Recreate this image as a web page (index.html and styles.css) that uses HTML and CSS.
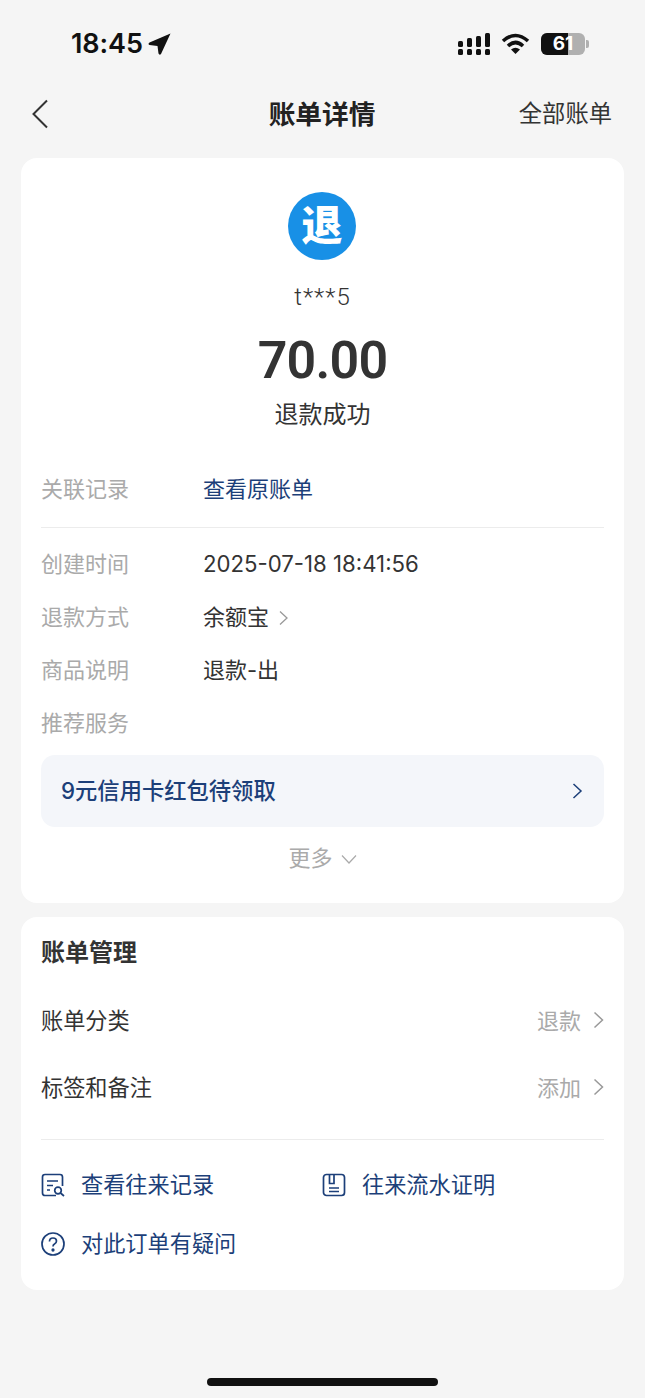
FILE: index.html
```html
<!DOCTYPE html>
<html lang="zh-CN">
<head>
<meta charset="utf-8">
<title>账单详情</title>
<link rel="stylesheet" href="styles.css">
</head>
<body>
<div class="page">
  <div class="status">
    <div class="status-left">
      <span class="time">18:45</span>
      <svg class="loc" width="23" height="22" viewBox="0 0 23 22"><path d="M22.500 0.500 L13 21 Q11.500 22.500 10.500 20.500 L9.500 13 L1.500 12 Q-0.500 11 1.500 9.500 Z" fill="#111"/></svg>
    </div>
    <div class="status-right">
      <svg width="34" height="22" viewBox="0 0 34 22" fill="#111"><rect x="1" y="8" width="5" height="6" rx="1.500"/><rect x="1" y="16" width="5" height="6" rx="1.500"/><rect x="10" y="5" width="5" height="9" rx="1.500"/><rect x="10" y="16" width="5" height="6" rx="1.500"/><rect x="19" y="3" width="5" height="11" rx="1.500"/><rect x="19" y="16" width="5" height="6" rx="1.500"/><rect x="28" y="0" width="5" height="14" rx="1.500"/><rect x="28" y="16" width="5" height="6" rx="1.500"/></svg>
      <svg class="wifi" width="29" height="21" viewBox="0 0 29 21" fill="none" stroke="#111" stroke-width="3.600"><path d="M2 8 Q14.500 -3 27 8"/><path d="M7 13 Q14.500 6 22 13"/><path d="M14.500 21 L10 16.500 Q14.500 13 19 16.500 Z" fill="#111" stroke="none"/></svg>
      <div class="battery"><div class="battery-fill"></div><span class="battery-num">61</span></div>
      <span class="battery-cap"></span>
    </div>
  </div>

  <div class="nav">
    <svg class="back" width="18" height="30" viewBox="0 0 18 30" fill="none" stroke="#333" stroke-width="2"><path d="M16 1.500 L2.500 15 L16 28.500"/></svg>
    <div class="nav-title">账单详情</div>
    <div class="nav-all">全部账单</div>
  </div>

  <section class="card card-main">
    <div class="avatar">退</div>
    <div class="account">t***5</div>
    <div class="amount">70.00</div>
    <div class="state">退款成功</div>
    <div class="row row-link"><span class="label">关联记录</span><span class="value link">查看原账单</span></div>
    <div class="line"></div>
    <div class="row row-time"><span class="label">创建时间</span><span class="value value-date">2025-07-18 18:41:56</span></div>
    <div class="row"><span class="label">退款方式</span><span class="value">余额宝<svg class="chev-inline" width="11" height="16" viewBox="0 0 11 16" fill="none" stroke="#999" stroke-width="1.300"><path d="M2 1.500 L9 8 L2 14.500"/></svg></span></div>
    <div class="row"><span class="label">商品说明</span><span class="value">退款-出</span></div>
    <div class="row"><span class="label">推荐服务</span></div>
    <div class="promo">
      <span>9元信用卡红包待领取</span>
      <svg width="11" height="16" viewBox="0 0 11 16" fill="none" stroke="#1c3f79" stroke-width="1.500"><path d="M1.500 1 L9 8 L1.500 15"/></svg>
    </div>
    <div class="more"><span>更多</span><svg width="16" height="10" viewBox="0 0 16 10" fill="none" stroke="#aaa" stroke-width="1.200"><path d="M1 1.500 L8 9 L15 1.500"/></svg></div>
  </section>

  <section class="card card-manage">
    <h2 class="manage-title">账单管理</h2>
    <div class="mrow"><span>账单分类</span><span class="mval">退款<svg width="11" height="18" viewBox="0 0 11 18" fill="none" stroke="#999" stroke-width="1.500"><path d="M1.500 1.500 L9.500 9 L1.500 16.500"/></svg></span></div>
    <div class="mrow"><span>标签和备注</span><span class="mval">添加<svg width="11" height="18" viewBox="0 0 11 18" fill="none" stroke="#999" stroke-width="1.500"><path d="M1.500 1.500 L9.500 9 L1.500 16.500"/></svg></span></div>
    <div class="line line-manage"></div>
    <div class="actions">
      <div class="action">
        <svg width="24" height="24" viewBox="0 0 24 24" fill="none" stroke="#1c3f79" stroke-width="1.700"><path d="M15 22.500 H4 Q1.500 22.500 1.500 20 V4 Q1.500 1.500 4 1.500 H19 Q21.500 1.500 21.500 4 V13"/><path d="M6 8 H17 M6 12.500 H12 M6 17 H9"/><circle cx="17" cy="17.500" r="3.300"/><path d="M19.500 20 L23 23"/></svg>
        <span>查看往来记录</span>
      </div>
      <div class="action">
        <svg width="24" height="24" viewBox="0 0 24 24" fill="none" stroke="#1c3f79" stroke-width="1.700"><rect x="1.500" y="1.500" width="21" height="21" rx="3"/><path d="M7.500 2 V10.500 H12 V2 M7 15 H17 M7 18.500 H17"/></svg>
        <span>往来流水证明</span>
      </div>
      <div class="action">
        <svg width="24" height="24" viewBox="0 0 24 24" fill="none" stroke="#1c3f79" stroke-width="1.700"><circle cx="12" cy="12" r="11"/><path d="M8.500 9.500 Q8.500 6 12 6 Q15.500 6 15.500 9 Q15.500 11 13.500 12 Q12 12.800 12 14.500"/><circle cx="12" cy="18" r="0.800" fill="#1c3f79"/></svg>
        <span>对此订单有疑问</span>
      </div>
    </div>
  </section>

  <div class="home"></div>
</div>
</body>
</html>
```
FILE: styles.css
```css
* { box-sizing: border-box; }
html, body { margin: 0; padding: 0; }
body {
  width: 645px;
  height: 1398px;
  overflow: hidden;
  background: #f5f5f5;
  font-family: Inter, "Noto Sans CJK SC", sans-serif;
  color: #333;
}
.page { position: relative; height: 1398px; display: flex; flex-direction: column; }

.status { height: 86px; display: flex; justify-content: space-between; padding: 30px 56px 0 71px; flex: none; }
.status-left { display: flex; align-items: flex-start; gap: 5px; }
.time { font-family: Inter, sans-serif; font-size: 27px; font-weight: 600; line-height: 28px; color: #111; letter-spacing: -0.100px; }
.loc { margin-top: 3px; }
.status-right { display: flex; align-items: flex-start; height: 26px; gap: 10px; padding-top: 3px; }
.battery { position: relative; width: 44px; height: 22px; margin-left: 1px; background: #b0b0b0; border-radius: 6px; overflow: hidden; }
.battery-fill { width: 27px; height: 22px; background: #111; }
.battery-num { position: absolute; left: 0; right: 0; top: 0; text-align: center; font-family: Inter, sans-serif; font-size: 19px; font-weight: 700; line-height: 22px; color: #fff; }
.battery-cap { width: 3px; height: 8px; margin: 7px 0 0 -9px; background: #b0b0b0; border-radius: 0 2px 2px 0; }

.nav { position: relative; height: 80px; flex: none; margin-top: -8px; display: flex; justify-content: center; }
.back { position: absolute; left: 31px; top: 21px; }
.nav-title { font-size: 26.700px; font-weight: 700; color: #222; line-height: 36px; margin-top: 18px; margin-right: 1px; }
.nav-all { position: absolute; right: 33px; top: 19px; font-size: 23.300px; line-height: 34px; color: #333; }

.card { background: #fff; border-radius: 16px; margin: 0 21px; flex: none; }
.card-main { height: 745px; padding: 34px 20px 0; display: flex; flex-direction: column; }
.avatar { width: 68px; height: 68px; margin-right: 1px; border-radius: 50%; background: #1890e6; color: #fff; align-self: center; text-align: center; font-size: 41px; font-weight: 900; line-height: 66px; flex: none; }
.account { text-align: center; font-family: Roboto, sans-serif; font-size: 24px; font-weight: 300; line-height: 30px; margin-top: 22px; letter-spacing: 1px; }
.amount { text-align: center; font-family: Roboto, sans-serif; font-size: 52px; font-weight: 600; line-height: 60px; margin-top: 19px; letter-spacing: -0.800px; color: #333; }
.state { text-align: center; font-size: 24px; line-height: 34px; margin-top: 7px; color: #333; }

.row { display: flex; height: 53px; align-items: center; font-size: 22px; flex: none; }
.row-link { margin-top: 28px; height: 54px; }
.row-time { margin-top: 7px; }
.label { width: 162px; color: #aaa; flex: none; }
.value { color: #333; display: flex; align-items: center; }
.value-date { font-size: 22.200px; margin-top: 3px; }
.link { color: #1c3f79; }
.chev-inline { margin-left: 9px; margin-top: 6px; }
.line { height: 1px; background: #ececec; flex: none; margin-top: 13px; }

.promo { display: flex; justify-content: space-between; align-items: center; height: 72px; border-radius: 14px; background: #f4f6fa; padding: 0 21px 0 20px; margin-top: 8px; font-size: 22.300px; font-weight: 500; color: #1c3f79; flex: none; }
.promo span { margin-bottom: 4px; }
.more { display: flex; justify-content: center; align-items: center; gap: 8px; margin-top: 11px; height: 36px; font-size: 22px; color: #aaa; }
.more svg { margin-top: 6px; }

.card-manage { height: 373px; margin-top: 14px; padding: 16px 20px 0; }
.manage-title { margin: 0; font-size: 24px; font-weight: 700; line-height: 40px; color: #333; }
.mrow { display: flex; justify-content: space-between; align-items: center; height: 67px; font-size: 22.200px; color: #333; }
.manage-title + .mrow { margin-top: 12px; }
.mval { display: flex; align-items: center; gap: 12px; color: #aaa; font-size: 22px; }
.mval svg { margin-top: 2px; }
.line-manage { margin-top: 20px; }
.actions { display: grid; grid-template-columns: 281px 1fr; row-gap: 23px; margin-top: 25px; }
.action { display: flex; align-items: center; gap: 16px; height: 36px; font-size: 22.200px; color: #1c3f79; }
.action svg { margin-top: 4px; }

.home { position: absolute; left: 207px; top: 1378px; width: 231px; height: 8px; border-radius: 4px; background: #111; }
```
